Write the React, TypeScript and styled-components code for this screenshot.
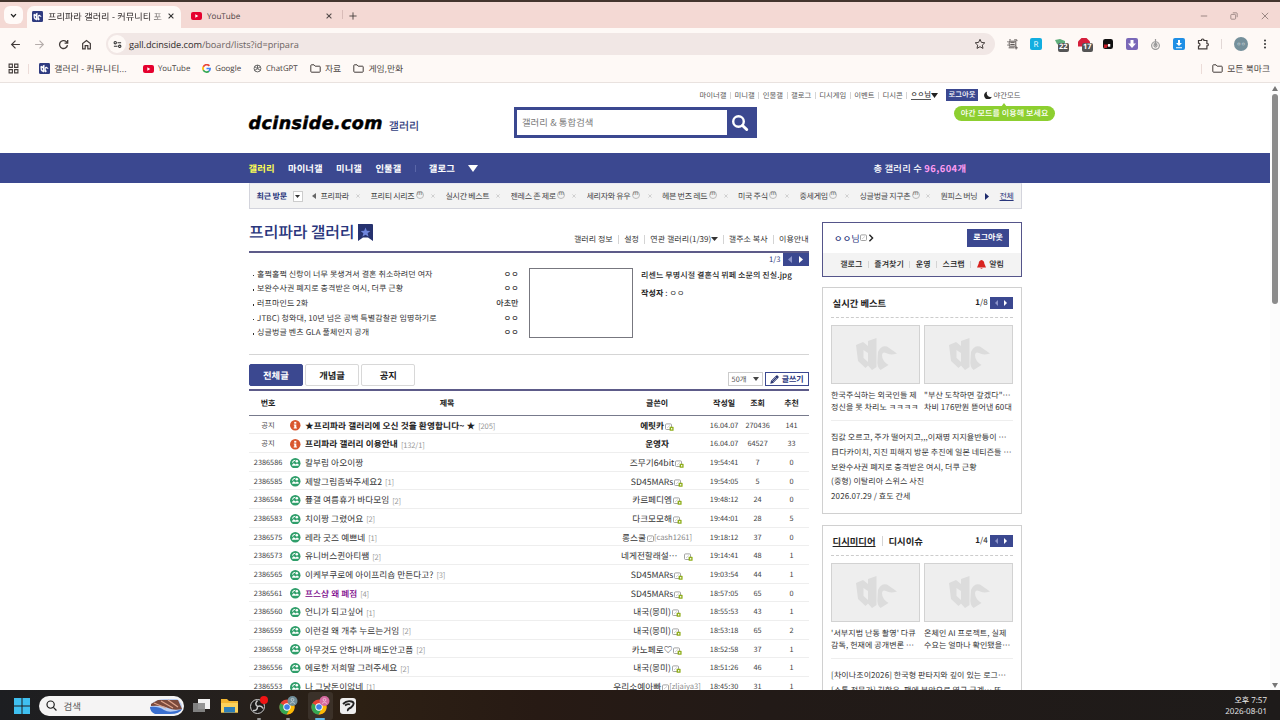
import React from "react";
import styled, { createGlobalStyle, css } from "styled-components";

const BLUE = "#3b4890";
const KR = '"Noto Sans CJK KR", "Liberation Sans", sans-serif';
const UI = '"Open Sans", "Noto Sans CJK KR", sans-serif';

const Global = createGlobalStyle`
  * { box-sizing: border-box; }
  html, body { margin: 0; padding: 0; background: #fff; overflow: hidden; }
  body { font-family: ${KR}; color: #333; text-rendering: geometricPrecision; }
  svg { display: block; flex: none; }
`;

const Screen = styled.div`
  width: 1280px;
  height: 720px;
  display: flex;
  flex-direction: column;
  overflow: hidden;
`;

/* ---------- browser frame ---------- */
const TabStrip = styled.div`
  height: 28px;
  flex: none;
  display: flex;
  align-items: flex-end;
  padding-left: 4px;
  background: #f4d9d4;
  border-top: 2px solid #43342d;
  font-family: ${UI};
`;
const TabSearch = styled.div`
  width: 19px;
  height: 18px;
  margin: 0 4px 4px 0;
  border-radius: 6px;
  background: #fffaf8;
  display: grid;
  place-items: center;
`;
const Tab = styled.div<{ $active?: boolean; $w: number }>`
  width: ${(p) => p.$w}px;
  height: 22px;
  padding: 0 7px 2px 5px;
  display: flex;
  align-items: center;
  gap: 5px;
  border-radius: 7px 7px 0 0;
  background: ${(p) => (p.$active ? "#fef9f6" : "transparent")};
  font-size: ${(p) => (p.$active ? 9.2 : 8.1)}px;
  color: ${(p) => (p.$active ? "#2b2626" : "#4c4343")};
`;
const TabTitle = styled.span<{ $fade?: boolean }>`
  flex: 1;
  overflow: hidden;
  white-space: nowrap;
  ${(p) => p.$fade && css`mask-image: linear-gradient(90deg, #000 88%, rgba(0,0,0,.3));`}
`;
const StripDivider = styled.i`
  width: 1px;
  height: 9px;
  margin: 0 6px 9px 3px;
  background: #d9bcb8;
`;
const NewTab = styled.div`
  margin-bottom: 8px;
`;
const WindowButtons = styled.div`
  margin-left: auto;
  display: flex;
  gap: 22.5px;
  padding: 0 11.5px 8px 0;
`;
const Toolbar = styled.div`
  height: 32px;
  flex: none;
  display: flex;
  align-items: center;
  background: #fef9f6;
  font-family: ${UI};
  padding: 0 10px 0 10px;
`;
const NavIcons = styled.div`
  display: flex;
  gap: 12.8px;
  width: 96px;
`;
const UrlBar = styled.div`
  width: 889px;
  height: 22px;
  border-radius: 11px;
  background: #f1e7e5;
  display: flex;
  align-items: center;
  padding: 0 9px 0 2px;
  font-size: 9.2px;
  letter-spacing: -0.03px;
  color: #6c6362;
  b { font-weight: 400; color: #2e2929; }
  svg:last-child { margin-left: auto; }
`;
const SiteInfo = styled.div`
  width: 18px;
  height: 18px;
  border-radius: 50%;
  background: #fef9f6;
  margin-right: 3px;
  display: flex;
  align-items: center;
  justify-content: center;
  && svg { margin: 0; }
`;
const Extensions = styled.div`
  display: flex;
  align-items: center;
  gap: 12px;
  margin-left: 12px;
`;
const Ext = styled.div<{ $bg?: string }>`
  position: relative;
  width: 12px;
  height: 12px;
  border-radius: 2px;
  background: ${(p) => p.$bg ?? "transparent"};
  color: #fff;
  font-size: 8px;
  display: grid;
  place-items: center;
`;
const Badge = styled.span`
  position: absolute;
  left: 4px;
  top: 5px;
  height: 9px;
  padding: 0 1px;
  border-radius: 2px;
  background: #555;
  font: 700 7.5px/9px ${UI};
`;
const Avatar = styled.div`
  width: 14px;
  height: 14px;
  border-radius: 50%;
  background: #75909b;
  color: #c9d6da;
  font-size: 5px;
  display: grid;
  place-items: center;
`;
const Bookmarks = styled.div`
  height: 23px;
  flex: none;
  display: flex;
  align-items: center;
  padding: 0 10px 5px 8px;
  background: #fef9f6;
  border-bottom: 1px solid #e9e2df;
  font: 8.8px ${UI};
  color: #4a4442;
`;
const Bookmark = styled.span<{ $x?: number; $ls?: number; $latin?: boolean }>`
  display: flex;
  align-items: center;
  gap: 4.3px;
  margin-left: ${(p) => p.$x ?? 12}px;
  letter-spacing: ${(p) => p.$ls ?? 0}px;
  font-size: ${(p) => (p.$latin ? 7.9 : 8.8)}px;
  line-height: 14px;
  white-space: nowrap;
`;
const Bar = styled.i<{ $h?: number; $m?: string; $c?: string }>`
  width: 1px;
  height: ${(p) => p.$h ?? 7}px;
  margin: ${(p) => p.$m ?? "0"};
  background: ${(p) => p.$c ?? "#d4d4d4"};
  flex: none;
`;

/* ---------- page ---------- */
const Viewport = styled.div`
  flex: 1;
  min-height: 0;
  display: flex;
  overflow: hidden;
  background: #fff;
`;
const Page = styled.div`
  width: 1270px;
  height: 607px;
  overflow: hidden;
`;
const Scrollbar = styled.div`
  width: 10px;
  display: flex;
  flex-direction: column;
  align-items: center;
  padding: 3px 0 2px;
  background: #fcfcfc;
`;
const Thumb = styled.i`
  width: 6px;
  height: 210px;
  margin: 3px 0 auto;
  border-radius: 3px;
  background: #8b8b8b;
`;
const Center = styled.div`
  width: 773.5px;
  margin: 0 0 0 248.6px;
`;
const Header = styled(Center)`
  height: 70px;
  display: flex;
  align-items: flex-start;
`;
const Brand = styled.div`
  display: flex;
  align-items: center;
  margin-top: 31px;
  height: 20px;
  width: 265.7px;
`;
const Logo = styled.span`
  font: italic 700 17.5px/20px "DejaVu Sans", sans-serif;
  letter-spacing: 0.4px;
  color: #000;
  -webkit-text-stroke: 0.5px #000;
`;
const LogoSub = styled.span`
  margin-left: 6px;
  font-size: 11px;
  font-weight: 500;
  color: #33407e;
  padding-top: 3px;
`;
const Search = styled.div`
  display: flex;
  width: 243px;
  height: 31px;
  margin-top: 24px;
  border: 3px solid ${BLUE};
  font-size: 9.33px;
  letter-spacing: 0.1px;
  line-height: 25px;
  color: #777;
  background: #fff;
  padding-left: 5px;
`;
const SearchButton = styled.div`
  margin-left: auto;
  width: 27px;
  background: ${BLUE};
  display: grid;
  place-items: center;
`;
const UtilWrap = styled.div`
  width: 322.5px;
  margin-left: -57px;
  height: 60px;
`;
const Util = styled.div`
  display: flex;
  align-items: center;
  height: 12px;
  margin-top: 6px;
  font-size: 7.33px;
  color: #555;
  white-space: nowrap;
`;
const UserName = styled.span`
  color: #333;
  border-bottom: 1px solid #555;
  line-height: 9px;
  font-weight: 500;
`;
const LogoutSmall = styled.span`
  margin: 0 6px 0 8px;
  width: 32px;
  height: 12px;
  line-height: 11.5px;
  text-align: center;
  background: ${BLUE};
  color: #fff;
  font-weight: 500;
`;
const NightTip = styled.div`
  position: relative;
  width: 101px;
  height: 15px;
  margin: 4.5px 0 0 254.5px;
  border-radius: 8px;
  background: #8dcf30;
  color: #fff;
  font-weight: 500;
  font-size: 8px;
  letter-spacing: 0.08px;
  line-height: 15.5px;
  text-align: center;
  white-space: nowrap;
  &::before {
    content: "";
    position: absolute;
    left: 47px;
    top: -3px;
    border: 3.5px solid transparent;
    border-top: 0;
    border-bottom: 4px solid #8dcf30;
  }
`;
const NavBand = styled.div`
  height: 30px;
  background: ${BLUE};
`;
const Nav = styled(Center)`
  height: 30px;
  display: flex;
  align-items: center;
  color: #fff;
  font-size: 9.33px;
  font-weight: 700;
  white-space: nowrap;
  letter-spacing: 0.08px;
`;
const NavItem = styled.span<{ $on?: boolean }>`
  margin-right: 13.4px;
  color: ${(p) => (p.$on ? "#ffff53" : "#fff")};
`;
const NavTotal = styled.span`
  margin-left: auto;
  margin-right: 55.5px;
  font-weight: 500;
  letter-spacing: 0.2px;
  b { color: #ff9cf3; font-weight: 700; letter-spacing: 0.45px; }
`;
const Recent = styled(Center)`
  height: 26px;
  display: flex;
  align-items: center;
  border: 1px solid #d3d4dc;
  border-top: 1px solid #e7e8f0;
  background: #f3f3f3;
  font-size: 8px;
  letter-spacing: -0.33px;
  white-space: nowrap;
  padding-left: 7px;
  color: #444;
`;
const RecentLabel = styled.b`
  color: #29367c;
  width: 36px;
  letter-spacing: -0.2px;
`;
const RecentSelect = styled.span`
  width: 10px;
  height: 11px;
  border: 1px solid #ccc;
  background: #fff;
  display: grid;
  place-items: center;
  margin-right: 9.5px;
`;
const RecentItem = styled.span<{ $w: number }>`
  width: ${(p) => p.$w}px;
  display: flex;
  align-items: center;
  overflow: hidden;
  &:not(:nth-last-of-type(2)) { padding-right: 10.5px; }
  svg:last-child:not(:first-child) { margin-left: auto; }
`;
const RecentAll = styled.span`
  margin-left: auto;
  margin-right: 7.5px;
  color: #29367c;
  text-decoration: underline;
`;
const MinorMark = styled.i`
  width: 8px;
  height: 8px;
  margin: -3px 0 0 1.5px;
  border: 1px solid #bbb;
  border-radius: 50%;
  font: 6.5px/4.5px "Liberation Sans", sans-serif;
  display: flex;
  justify-content: center;
  color: #666;
  letter-spacing: 0;
`;
const Columns = styled(Center)`
  display: flex;
  justify-content: space-between;
  align-items: flex-start;
`;
const Main = styled.main`
  width: 560px;
`;
const TitleRow = styled.div`
  height: 43.5px;
  display: flex;
  border-bottom: 2px solid #5d5b89;
`;
const Title = styled.h1`
  margin: 9.5px 0 0 0.5px;
  height: 24px;
  font-size: 16px;
  line-height: 24px;
  font-weight: 500;
  letter-spacing: -0.18px;
  color: #29367c;
`;
const Flag = styled.span`
  margin: 15px 0 0 3px;
`;
const TitleLinks = styled.div`
  margin: 24px 0 0 auto;
  height: 12px;
  display: flex;
  align-items: center;
  font-size: 8px;
  white-space: nowrap;
  letter-spacing: 0.04px;
  color: #333;
`;
const Featured = styled.section`
  height: 102px;
  display: flex;
  border-bottom: 1px solid #d5d5d5;
`;
const HotList = styled.ul`
  list-style: none;
  margin: 0;
  padding: 15.3px 0 0 4px;
  width: 270px;
`;
const HotItem = styled.li`
  display: flex;
  justify-content: space-between;
  height: 14.67px;
  line-height: 14.67px;
  font-size: 8px;
  white-space: nowrap;
  color: #333;
  letter-spacing: 0.1px;
  &::before {
    content: "";
    width: 1.5px;
    height: 1.5px;
    margin: 7px 3px 0 0;
    background: #333;
  }
  b { margin-left: auto; font-weight: 500; }
`;
const HotThumb = styled.div`
  width: 104px;
  height: 70px;
  margin: 15.5px 0 0 10px;
  border: 1px solid #77777f;
`;
const HotInfo = styled.div`
  flex: 1;
  margin-left: 8.5px;
  font-size: 8px;
  letter-spacing: 0.09px;
  color: #222;
  white-space: nowrap;
  p { margin: 0; font-weight: 500; line-height: 12px; height: 18px; padding-top: 4.5px; }
  p + p { font-weight: 400; }
`;
const Pager = styled.div`
  display: flex;
  align-items: center;
  justify-content: flex-end;
  font-size: 7.6px;
  line-height: 13px;
  color: #29367c;
`;
const Arrows = styled.span<{ $w?: number; $h?: number }>`
  width: ${(p) => p.$w ?? 26}px;
  height: ${(p) => p.$h ?? 13}px;
  margin-left: 2px;
  background: ${BLUE};
  display: flex;
  align-items: center;
  justify-content: space-around;
  padding: 0 2px;
`;
const Controls = styled.div`
  height: 36px;
  display: flex;
  align-items: flex-start;
  padding-top: 9.5px;
  border-bottom: 2px solid #5d5b89;
`;
const ModeButton = styled.div<{ $on?: boolean }>`
  width: 54.5px;
  height: 22px;
  margin-right: 1.7px;
  border: 1px solid ${(p) => (p.$on ? BLUE : "#d8d8d8")};
  border-radius: 2px;
  background: ${(p) => (p.$on ? BLUE : "#fff")};
  color: ${(p) => (p.$on ? "#fff" : "#222")};
  font-size: 9.33px;
  font-weight: 700;
  line-height: 20.5px;
  text-align: center;
`;
const CountSelect = styled.div`
  margin: 7.5px 2px 0 auto;
  width: 35px;
  height: 14px;
  padding: 1px 3px 0;
  border: 1px solid #ccc;
  display: flex;
  align-items: center;
  justify-content: space-between;
  font-size: 7.33px;
  color: #555;
`;
const WriteButton = styled.div`
  margin-top: 7.5px;
  width: 44px;
  height: 14px;
  padding-top: 1.5px;
  border: 1px solid ${BLUE};
  display: flex;
  align-items: center;
  justify-content: center;
  gap: 3px;
  font-size: 8px;
  font-weight: 700;
  letter-spacing: -0.2px;
  color: #29367c;
`;
const Row = styled.div<{ $head?: boolean }>`
  display: grid;
  grid-template-columns: 39px 319px 101px 33px 34px 34px;
  height: ${(p) => (p.$head ? 25.3 : 18.67)}px;
  padding-top: ${(p) => (p.$head ? 2.4 : 2)}px;
  align-items: center;
  text-align: center;
  white-space: nowrap;
  font-size: ${(p) => (p.$head ? 8 : 7.33)}px;
  line-height: 12px;
  font-weight: ${(p) => (p.$head ? 700 : 400)};
  color: ${(p) => (p.$head ? "#222" : "#444")};
  border-bottom: 1px solid ${(p) => (p.$head ? "#777a8c" : "#eee")};
`;
const Subject = styled.span<{ $bold?: boolean; $visited?: boolean }>`
  display: flex;
  align-items: center;
  padding-left: 2.5px;
  font-size: 8.67px;
  letter-spacing: ${(p) => (p.$bold ? 0.1 : 0.05)}px;
  font-weight: ${(p) => (p.$bold ? 700 : p.$visited ? 500 : 400)};
  color: ${(p) => (p.$visited ? "#770088" : p.$bold ? "#222" : "#333")};
  svg { margin-right: 4.5px; }
`;
const Replies = styled.em`
  font: 400 7.6px/10px ${KR};
  letter-spacing: -0.2px;
  color: #999;
  margin: 3px 0 0 3px;
`;
const Writer = styled.span<{ $bold?: boolean }>`
  display: flex;
  align-items: center;
  justify-content: center;
  font-size: 8.67px;
  font-weight: ${(p) => (p.$bold ? 700 : 400)};
  color: ${(p) => (p.$bold ? "#222" : "#333")};
  svg { margin: 2px 0 0 1px; }
  small { font-size: 7.6px; color: #888; padding-top: 1px; }
`;
const Side = styled.aside`
  width: 200px;
  margin-top: 13px;
  display: flex;
  flex-direction: column;
  gap: 11px;
`;
const LoginBox = styled.section`
  height: 54.5px;
  margin-bottom: -1px;
  border: 1px solid #55558a;
  white-space: nowrap;
`;
const LoginTop = styled.div`
  height: 29.5px;
  display: flex;
  align-items: center;
  padding: 0 12px 0 11px;
  font-size: 9.2px;
  letter-spacing: 0.1px;
  color: #29367c;
  b { font-weight: 500; }
`;
const LogoutButton = styled.div`
  margin-left: auto;
  width: 42px;
  height: 18px;
  background: ${BLUE};
  color: #fff;
  font-size: 8px;
  font-weight: 700;
  line-height: 18px;
  text-align: center;
`;
const LoginLinks = styled.div`
  height: 23px;
  padding-top: 1.5px;
  background: #f3f3f3;
  display: flex;
  align-items: center;
  justify-content: center;
  font-size: 8px;
  font-weight: 500;
  color: #222;
`;
const Panel = styled.section`
  height: 227px;
  border: 1px solid #d0d0d0;
  padding: 0 8.5px 0 8px;
  flex: none;
`;
const PanelHead = styled.div`
  height: 30px;
  display: flex;
  align-items: center;
  font-size: 9.33px;
  font-weight: 700;
  color: #222;
  border-bottom: 1.5px dashed #ccc;
  padding: 1px 0 0 1.5px;
  white-space: nowrap;
`;
const PanelPage = styled.span`
  margin-left: auto;
  font-size: 8px;
  font-weight: 400;
  b { font-weight: 700; }
`;
const Cards = styled.div`
  display: flex;
  justify-content: space-between;
  padding: 7px 0 5.5px;
  border-bottom: 1px solid #eee;
`;
const Card = styled.div`
  width: 88.5px;
  font-size: 8px;
  letter-spacing: 0.08px;
  line-height: 12.3px;
  color: #333;
  white-space: nowrap;
`;
const CardThumb = styled.div`
  height: 59px;
  margin-bottom: 6.5px;
  border: 1px solid #d2d2d2;
  background: #eee;
`;
const PanelList = styled.div`
  padding-top: 10.3px;
  font-size: 8px;
  letter-spacing: 0.08px;
  line-height: 14.67px;
  color: #333;
  white-space: nowrap;
`;

/* ---------- taskbar ---------- */
const Taskbar = styled.footer`
  height: 30px;
  flex: none;
  display: flex;
  align-items: center;
  padding: 1px 13px 0 14px;
  background: linear-gradient(90deg, #1d1e21 0%, #25201d 18%, #2d2014 28%, #271a14 42%, #221a17 60%, #1e1b1a 100%);
  font-family: ${UI};
`;
const TaskSearch = styled.div`
  width: 145px;
  height: 20px;
  margin: 0 9px 0 8.5px;
  border-radius: 10px;
  background: #f5f4f4;
  display: flex;
  align-items: center;
  gap: 7px;
  padding: 0 1px 0 7px;
  font-size: 9.5px;
  color: #555;
  svg:last-child { margin-left: auto; }
`;
const Task = styled.div<{ $w?: number; $on?: boolean; $run?: boolean }>`
  position: relative;
  width: ${(p) => p.$w ?? 29.3}px;
  height: 28px;
  display: grid;
  place-items: center;
  border-radius: 3px;
  background: ${(p) => (p.$on ? "rgba(255,255,255,.08)" : "none")};
  &::after {
    content: "";
    position: absolute;
    bottom: 0;
    width: ${(p) => (p.$on ? 10 : 4)}px;
    height: 1.5px;
    border-radius: 1px;
    background: ${(p) => (p.$on ? "#5fb8e8" : p.$run ? "#999" : "transparent")};
  }
`;
const Clock = styled.div`
  margin-left: auto;
  text-align: right;
  color: #eee;
  font-size: 8px;
  line-height: 11px;
`;

/* ---------- icons ---------- */
const Svg = (p: { s?: number; w?: number; h?: number; v?: string; c?: string; sw?: number; children: React.ReactNode }) => (
  <svg width={p.w ?? p.s ?? 10} height={p.h ?? p.s ?? 10} viewBox={p.v ?? "0 0 10 10"} fill="none" stroke={p.c ?? "#433c3a"} strokeWidth={p.sw ?? 1.1}>
    {p.children}
  </svg>
);
const Tri = ({ d, c = "#333", w = 6, h = 4 }: { d: "u" | "d" | "l" | "r"; c?: string; w?: number; h?: number }) => {
  const pts = { u: "0,10 10,10 5,0", d: "0,0 10,0 5,10", l: "10,0 10,10 0,5", r: "0,0 0,10 10,5" }[d];
  return (
    <svg width={w} height={h} viewBox="0 0 10 10" preserveAspectRatio="none"><polygon points={pts} fill={c} /></svg>
  );
};
const Close = ({ s = 6, c = "#333", sw = 1.8 }) => <Svg s={s} c={c} sw={sw}><path d="M1 1l8 8M9 1L1 9" /></Svg>;
const MARK =
  "M25 20L32 17L37 21V16L45.500 13V42L41 45L37 40.500L34.500 43L27 36ZM32.500 25V33L37 37V28Z M47 27Q50 20 56 21.500L66 28.500Q59 30.500 55 28Q51.500 26.500 51 30Q51 36 57.500 40L49.500 45Q45.500 42 46.500 34Z";
const DcIcon = ({ s = 11 }) => (
  <svg width={s} height={s} viewBox="0 0 12 12"><rect width="12" height="12" rx="1.5" fill="#2f3b80" /><path transform="translate(-4 -1.7) scale(.22 .27)" d={MARK} fill="#fff" fillRule="evenodd" /></svg>
);
const YtIcon = () => (
  <svg width="11" height="8" viewBox="0 0 11 8"><rect width="11" height="8" rx="2" fill="#e5002e" /><path d="M4.3 2.2v3.6L7.3 4z" fill="#fff" /></svg>
);
const GoogleIcon = () => (
  <svg width="9" height="9" viewBox="0 0 10 10" fill="none" strokeWidth="1.9">
    <path d="M8.2 2.1A4 4 0 0 0 1.5 3.2" stroke="#ea4335" /><path d="M1.5 3.2a4 4 0 0 0 0 3.6" stroke="#fbbc05" />
    <path d="M1.5 6.8A4 4 0 0 0 7.8 7.9" stroke="#34a853" /><path d="M5 5h4A4 4 0 0 1 7.8 7.9" stroke="#4285f4" />
  </svg>
);
const Folder = () => <Svg w={11} h={9} v="0 0 11 9" sw={1}><path d="M.8 7.3V1.5Q.8.8 1.5.8H4l1.2 1.4h4.3q.7 0 .7.7v4.6q0 .7-.7.7h-8q-.7 0-.7-.9z" /></Svg>;
const Info = () => (
  <svg width="10.500" height="10.500" viewBox="0 0 10 10"><circle cx="5" cy="5" r="5" fill="#d9572f" /><rect x="4" y="1.800" width="2" height="1.700" fill="#fff" /><path d="M3.600 4.300H6v2.900h.6v1H3.500v-1h.6V5.200h-.5z" fill="#fff" /></svg>
);
const Photo = () => (
  <svg width="10.500" height="10.500" viewBox="0 0 10 10">
    <circle cx="5" cy="5" r="5" fill="#2f9e6a" />
    <path d="M1.900 7.300Q2 5.400 3.600 4.900L5.400 6.100 6.600 5.200 8.200 5.900V7.300z" fill="#fff" />
    <path d="M2.300 4.300Q3 2.300 5 2.200" stroke="#fff" strokeWidth="1" fill="none" />
    <circle cx="6.500" cy="3.200" r="1.200" fill="#fff" />
  </svg>
);
const NickCon = ({ fixed }: { fixed?: boolean }) => (
  <svg width={fixed ? 9 : 7} height="8" viewBox={fixed ? "0 0 9 8" : "0 0 7 8"}>
    <rect x=".5" y=".9" width="6" height="5.6" rx="1" fill="#fff" stroke="#999" strokeWidth=".9" />
    <path d="M2 5l3-2.6" stroke="#bbb" strokeWidth=".7" />
    {fixed && <><rect x="4.6" y="3.8" width="4" height="4" rx=".6" fill="#8fae1b" /><rect x="6" y="5.1" width="1.3" height="1.4" fill="#fff" /></>}
  </svg>
);
const Chrome = ({ badge }: { badge: string }) => (
  <svg width="20" height="20" viewBox="0 0 20 20">
    <circle cx="9" cy="11" r="7.6" fill="#ea4335" /><path d="M2.4 7.2A7.6 7.6 0 0 0 8.6 18.6L12.3 13z" fill="#34a853" />
    <path d="M9 7.6h6.8A7.6 7.6 0 0 1 8.6 18.6L12.2 12z" fill="#fbbc05" /><circle cx="9" cy="11" r="3.7" fill="#fff" /><circle cx="9" cy="11" r="2.8" fill="#3f7fe8" />
    <circle cx="14.5" cy="5" r="5" fill={badge} /><circle cx="14.5" cy="3.8" r="1.4" fill="none" stroke="#fff" strokeWidth=".7" opacity=".7" /><path d="M12 7.5q2.5-2.6 5 0" fill="none" stroke="#fff" strokeWidth=".7" opacity=".7" />
  </svg>
);
const DcThumb = () => (
  <svg width="86" height="57" viewBox="1 1 86 57"><path d={MARK} fill="#dcdcdc" fillRule="evenodd" /></svg>
);

/* ---------- data ---------- */
const recents: [string, boolean, number][] = [
  ["프리파라", false, 50], ["프리티 시리즈", true, 75], ["실시간 베스트", false, 65], ["젠레스 존 제로", true, 76],
  ["세리자와 유우", true, 75.5], ["헤븐 번즈 레드", true, 76], ["미국 주식", true, 61.5], ["중세게임", true, 60], ["싱글벙글 지구촌", true, 81], ["원피스 버닝", false, 38],
];
const hot: [string, string][] = [
  ["훌쩍훌쩍 신랑이 너무 못생겨서 결혼 취소하려던 여자", "ㅇㅇ"], ["보완수사권 폐지로 충격받은 여시, 더쿠 근황", "ㅇㅇ"], ["러프마인드 2화", "아초만"],
  ["JTBC) 청와대, 10년 넘은 공백 특별감찰관 임명하기로", "ㅇㅇ"], ["싱글벙글 벤츠 GLA 풀체인지 공개", "ㅇㅇ"],
];
type Post = { no: string; t: string; r?: string; w: string; id?: string; con?: boolean; d: string; v: string; u: string; visited?: boolean; gap?: boolean };
const posts: Post[] = [
  { no: "공지", t: "★프리파라 갤러리에 오신 것을 환영합니다~ ★", r: "205", w: "에릿카", con: true, d: "16.04.07", v: "270436", u: "141" },
  { no: "공지", t: "프리파라 갤러리 이용안내", r: "132/1", w: "운영자", d: "16.04.07", v: "64527", u: "33" },
  { no: "2386586", t: "칼부림 아오이짱", w: "즈무기64bit", con: true, d: "19:54:41", v: "7", u: "0" },
  { no: "2386585", t: "제발그림좀봐주세요2", r: "1", w: "SD45MARs", con: true, d: "19:54:05", v: "5", u: "0" },
  { no: "2386584", t: "픂갤 여름휴가 바다모임", r: "2", w: "카르페디엠", con: true, d: "19:48:12", v: "24", u: "0" },
  { no: "2386583", t: "치이짱 그렸어요", r: "2", w: "다크모모해", con: true, d: "19:44:01", v: "28", u: "5" },
  { no: "2386575", t: "레라 굿즈 예쁘네", r: "1", w: "롱스쿨", id: "cash1261", d: "19:18:12", v: "37", u: "0" },
  { no: "2386573", t: "유니버스퀸아티쌤", r: "2", w: "네게전할래설⋯", con: true, gap: true, d: "19:14:41", v: "48", u: "1" },
  { no: "2386565", t: "이케부쿠로에 아이프리숍 만든다고?", r: "3", w: "SD45MARs", con: true, d: "19:03:54", v: "44", u: "1" },
  { no: "2386561", t: "프스샵 왜 폐점", r: "4", w: "SD45MARs", con: true, d: "18:57:05", v: "65", u: "0", visited: true },
  { no: "2386560", t: "언니가 되고싶어", r: "1", w: "내국(몽미)", con: true, d: "18:55:53", v: "43", u: "1" },
  { no: "2386559", t: "이런걸 왜 개추 누르는거임", r: "2", w: "내국(몽미)", con: true, d: "18:53:18", v: "65", u: "2" },
  { no: "2386558", t: "아무것도 안하니까 배도안고픔", r: "2", w: "카노페로♡", con: true, d: "18:52:58", v: "37", u: "1" },
  { no: "2386556", t: "에로한 저희딸 그려주세요", r: "2", w: "내국(몽미)", con: true, d: "18:51:26", v: "46", u: "1" },
  { no: "2386553", t: "나 그냥돈이없네", r: "1", w: "우리소예아빠", id: "zljaiya3", d: "18:45:30", v: "31", u: "1" },
];

const PanelArrows = () => (
  <Arrows $w={23} $h={12}><Tri d="l" c="#8b93c9" w={3} h={6} /><Tri d="r" c="#fff" w={3} h={6} /></Arrows>
);

export default function App() {
  return (
    <Screen>
      <Global />
      <TabStrip>
        <TabSearch><Svg s={7} c="#222" sw={1.9}><path d="M1.5 3l3.5 3.7L8.5 3" /></Svg></TabSearch>
        <Tab $active $w={154}><DcIcon /><TabTitle $fade>프리파라 갤러리 - 커뮤니티 포</TabTitle><Close /></Tab>
        <Tab $w={158}><span /><YtIcon /><TabTitle>YouTube</TabTitle><Close c="#554c4b" /></Tab>
        <StripDivider />
        <NewTab><Svg s={8}><path d="M5 .5v9M.5 5h9" /></Svg></NewTab>
        <WindowButtons>
          <Svg s={8} c="#8f7c79"><path d="M1 5h8" /></Svg>
          <Svg s={8} c="#8f7c79" sw={1}><rect x="1" y="3" width="6" height="6" rx="1" /><path d="M3.5 1H8q1 0 1 1v4.500" /></Svg>
          <Close s={8} c="#8f7c79" sw={1.1} />
        </WindowButtons>
      </TabStrip>
      <Toolbar>
        <NavIcons>
          <Svg s={11} sw={1.1}><path d="M9 5H1.500M5 1.500L1.500 5 5 8.500" /></Svg>
          <Svg s={11} c="#b5adab" sw={1}><path d="M1 5h7.500M5 1.500L8.500 5 5 8.500" /></Svg>
          <Svg s={11} sw={1.2}><path d="M8.600 5.500A3.600 3.600 0 1 1 7.500 2.400L8.600 3.500M8.800 1v2.700H6" /></Svg>
          <Svg s={11} sw={1.1}><path d="M1.500 9V4.200L5 1.300l3.500 2.900V9H6.200V6H3.800v3z" /></Svg>
        </NavIcons>
        <UrlBar>
          <SiteInfo><Svg s={9} c="#333" sw={1.2}><circle cx="2.500" cy="3" r="1.300" /><path d="M5 3h4M1 7h4" /><circle cx="7.500" cy="7" r="1.300" /></Svg></SiteInfo>
          <b>gall.dcinside.com</b>/board/lists?id=pripara
          <Svg s={12} v="0 0 12 12" sw={1}><path d="M6 1.300l1.400 3.100 3.400.4-2.500 2.300.7 3.300L6 8.700l-3 1.700.7-3.300L1.200 4.800l3.400-.4z" /></Svg>
        </UrlBar>
        <Extensions>
          <Svg s={11} c="#5c5654" sw={0.9}><path d="M2 2h6v4.500H2zM.8 2v1M.8 5v1M2 .800h1.500M6.500.800H9V2M3 3.300h4M3 5h4M1.500 8h5M8.300 6.500v3M6.800 8h3" /></Svg>
          <Ext $bg="#12aee0">R</Ext>
          <Ext><svg width="12" height="12" viewBox="0 0 12 12"><path d="M1 2l5-1 5 2v4q-5 2-8-1z" fill="#5fae7c" /></svg><Badge>22</Badge></Ext>
          <Ext><svg width="12" height="12" viewBox="0 0 12 12"><path d="M3.500 0h5L12 3.500v5H0v-5z" fill="#d51f3c" /></svg><Badge>17</Badge></Ext>
          <Ext><svg width="10" height="10" viewBox="0 0 11 11"><rect y="0" width="11" height="11" rx="2.500" fill="#111" /><path d="M1 6h5l-2 4H1z" fill="#c4202b" /><path d="M5.500 5.500h2.500v3H5.500z" fill="#fff" /></svg></Ext>
          <Ext $bg="#7a68b8"><svg width="8" height="8" viewBox="0 0 8 8"><path d="M2.500 0h3v3.500H8L4 8 0 3.500h2.500z" fill="#fff" /></svg></Ext>
          <Svg s={11} c="#999"><circle cx="5" cy="6" r="3.500" /><circle cx="5" cy="6" r="1.400" /><path d="M5 0v6M3.500 4L5 6l1.500-2" /></Svg>
          <Ext $bg="#1f8fe5"><svg width="8" height="9" viewBox="0 0 8 9"><path d="M3 0h2v3h2L4 6 1 3h2zM1 7.300h6v1H1z" fill="#fff" /></svg></Ext>
          <Svg s={12} v="0 0 12 12" sw={1.2}><path d="M1.500 2.500h3q-.2-1.500 1.200-1.500t1.200 1.500h3v3q1.400-.1 1.400 1.200t-1.400 1.200v3h-8.400V8.200q1.500 0 1.500-1.500T1.500 5.200z" /></Svg>
          <Bar $h={10} $c="#e2d8d6" />
          <Avatar>ㅇㅇ</Avatar>
          <svg width="10" height="10" viewBox="0 0 10 10" fill="#333"><circle cx="5" cy="1.600" r="1" /><circle cx="5" cy="5" r="1" /><circle cx="5" cy="8.400" r="1" /></svg>
        </Extensions>
      </Toolbar>
      <Bookmarks>
        <Svg s={11} sw={1}><path d="M1 1h3v3H1zM6 1h3v3H6zM1 6h3v3H1zM6 6h3v3H6z" /></Svg>
        <Bar $h={10} $m="0 0 0 9px" $c="#ecdcd8" />
        <Bookmark $x={10} $ls={0.1}><DcIcon />갤러리 - 커뮤니티...</Bookmark>
        <Bookmark $x={16} $latin><YtIcon />YouTube</Bookmark>
        <Bookmark $x={11.500} $latin><GoogleIcon />Google</Bookmark>
        <Bookmark $x={11.500} $latin><Svg s={9} c="#666"><circle cx="5" cy="5" r="3.800" /><path d="M5 1.200v4l3.300 2M5 5.200L1.700 7.200M2 3l3 2.200L8 3" /></Svg>ChatGPT</Bookmark>
        <Bookmark><Folder />자료</Bookmark>
        <Bookmark><Folder />게임,만화</Bookmark>
        <Bar $h={10} $m="0 0 0 auto" $c="#ecdcd8" />
        <Bookmark $x={10}><Folder />모든 북마크</Bookmark>
      </Bookmarks>

      <Viewport>
        <Page>
          <Header>
            <Brand><Logo>dcinside.com</Logo><LogoSub>갤러리</LogoSub></Brand>
            <Search>
              갤러리 &amp; 통합검색
              <SearchButton>
                <svg width="18" height="18" viewBox="0 0 18 18" fill="none" stroke="#fff"><circle cx="7.500" cy="7.500" r="5.300" strokeWidth="2.400" /><path d="M11.500 11.500l4.200 4" strokeWidth="3" strokeLinecap="round" /></svg>
              </SearchButton>
            </Search>
            <UtilWrap>
              <Util>
                {["마이너갤", "미니갤", "인물갤", "갤로그", "디시게임", "이벤트", "디시콘"].map((t) => (
                  <React.Fragment key={t}>{t}<Bar $m="0 3.500px" /></React.Fragment>
                ))}
                <UserName>ㅇㅇ님</UserName><Tri d="d" w={7} h={5} c="#222" />
                <LogoutSmall>로그아웃</LogoutSmall>
                <svg width="8" height="8" viewBox="0 0 10 10"><path d="M4 .5A5 5 0 1 0 9.800 7.200 4.800 4.800 0 0 1 4 .5z" fill="#222" /></svg>
                <span>&nbsp;야간모드</span>
              </Util>
              <NightTip>야간 모드를 이용해 보세요</NightTip>
            </UtilWrap>
          </Header>
          <NavBand>
            <Nav>
              <NavItem $on>갤러리</NavItem><NavItem>마이너갤</NavItem><NavItem>미니갤</NavItem><NavItem>인물갤</NavItem>
              <Bar $c="#5a66a8" $m="0 13px 0 0" /><NavItem>갤로그</NavItem><Tri d="d" c="#fff" w={10} h={7} />
              <NavTotal>총 갤러리 수 <b>96,604개</b></NavTotal>
            </Nav>
          </NavBand>
          <Recent>
            <RecentLabel>최근 방문</RecentLabel>
            <RecentSelect><Tri d="d" w={5} h={3} /></RecentSelect>
            <Tri d="l" c="#666" w={4} h={6} />
            <Bar $m="0 3.500px 0 0" $c="transparent" />
            {recents.map(([t, m, w], i) => (
              <RecentItem key={t} $w={w}>
                <span>{t}</span>{m && <MinorMark>m</MinorMark>}{i < recents.length - 1 && <Close s={4} c="#bbb" sw={1.6} />}
              </RecentItem>
            ))}
            <Bar $m="0 5px 0 0" $c="transparent" />
            <Tri d="r" c="#1e2a6c" w={4} h={7} />
            <RecentAll>전체</RecentAll>
          </Recent>

          <Columns>
            <Main>
              <TitleRow>
                <Title>프리파라 갤러리</Title>
                <Flag><svg width="17" height="17" viewBox="0 0 17 17"><path d="M1 0h14q1 0 1 1v16l-5-3.500H6L1 17z" fill="#26326f" /><path d="M8.500 3.500l1.300 3.300 3.500.2-2.700 2.200.9 3.300-3-1.800-3 1.800.9-3.300L3.700 7l3.500-.2z" fill="#6f86dd" /></svg></Flag>
                <TitleLinks>
                  갤러리 정보<Bar $m="0 5.200px" $h={9} />설정<Bar $m="0 5.200px" $h={9} />연관 갤러리(1/39)<Tri d="d" w={7} /><Bar $m="0 5px 0 4.500px" $h={9} />갤주소 복사<Bar $m="0 5.200px" $h={9} />이용안내
                </TitleLinks>
              </TitleRow>
              <Featured>
                <HotList>
                  {hot.map(([t, w]) => <HotItem key={t}>{t}<b>{w}</b></HotItem>)}
                </HotList>
                <HotThumb />
                <HotInfo>
                  <Pager>1/3<Arrows><Tri d="l" c="#8b93c9" w={4} h={7} /><Tri d="r" c="#fff" w={4} h={7} /></Arrows></Pager>
                  <p>리센느 무명시절 결혼식 뷔페 소문의 진실.jpg</p>
                  <p><b>작성자</b> : ㅇㅇ</p>
                </HotInfo>
              </Featured>
              <Controls>
                <ModeButton $on>전체글</ModeButton><ModeButton>개념글</ModeButton><ModeButton>공지</ModeButton>
                <CountSelect>50개<Tri d="d" c="#444" w={6} h={4} /></CountSelect>
                <WriteButton>
                  <svg width="9" height="9" viewBox="0 0 9 9"><path d="M.3 8.700L1 5.800 6 .8Q7-.2 8.100.9T8.200 3l-5 5z" fill="#26326f" /><path d="M1.800 6.200L6 2.100M2.900 7.200l4.200-4.200" stroke="#fff" strokeWidth=".5" /></svg>
                  글쓰기
                </WriteButton>
              </Controls>
              <Row $head><span>번호</span><span>제목</span><span>글쓴이</span><span>작성일</span><span>조회</span><span>추천</span></Row>
              {posts.map((p) => {
                const notice = p.no === "공지";
                return (
                  <Row key={p.t}>
                    <span>{p.no}</span>
                    <Subject $bold={notice} $visited={p.visited}>{notice ? <Info /> : <Photo />}{p.t}{p.r && <Replies>[{p.r}]</Replies>}</Subject>
                    <Writer $bold={notice}>
                      {p.w}{p.gap && <>&nbsp;&nbsp;&nbsp;</>}{p.con && <NickCon fixed />}{p.id && <><NickCon /><small>[{p.id}]</small></>}
                    </Writer>
                    <span>{p.d}</span><span>{p.v}</span><span>{p.u}</span>
                  </Row>
                );
              })}
            </Main>

            <Side>
              <LoginBox>
                <LoginTop>
                  <b>ㅇㅇ</b>님<NickCon /><Svg w={8} h={10} c="#222" sw={1.7}><path d="M3 1l4 4-4 4" /></Svg>
                  <LogoutButton>로그아웃</LogoutButton>
                </LoginTop>
                <LoginLinks>
                  갤로그<Bar $m="0 5.500px" />즐겨찾기<Bar $m="0 5.500px" />운영<Bar $m="0 5.500px" />스크랩<Bar $m="0 5.500px" />
                  <svg width="9" height="9" viewBox="0 0 9 9"><path d="M4.500 0Q7.300.5 7.300 3.500L9 7.500H0l1.700-4Q1.700.5 4.500 0zM3.200 8h2.600q-1.300 1.600-2.600 0z" fill="#d8231f" /></svg>
                  &nbsp;&nbsp;알림
                </LoginLinks>
              </LoginBox>
              <Panel>
                <PanelHead>실시간 베스트<PanelPage><b>1</b>/8</PanelPage><PanelArrows /></PanelHead>
                <Cards>
                  <Card><CardThumb><DcThumb /></CardThumb><div>한국주식하는 외국인들 제</div><div>정신을 못 차리노 ㅋㅋㅋㅋ</div></Card>
                  <Card><CardThumb><DcThumb /></CardThumb><div>"부산 도착하면 갚겠다"⋯</div><div>차비 176만원 뜯어낸 60대</div></Card>
                </Cards>
                <PanelList>
                  <div>집값 오르고, 주가 떨어지고,,,이재명 지지율반등이 ⋯</div>
                  <div>日다카이치, 지진 피해지 방문 추진에 일본 네티즌들 ⋯</div>
                  <div>보완수사권 폐지로 충격받은 여시, 더쿠 근황</div>
                  <div>(중형) 이탈리아 스위스 사진</div>
                  <div>2026.07.29 / 효도 간세</div>
                </PanelList>
              </Panel>
              <Panel>
                <PanelHead><u>디시미디어</u><Bar $m="0 6px" $h={10} />디시이슈<PanelPage><b>1</b>/4</PanelPage><PanelArrows /></PanelHead>
                <Cards>
                  <Card><CardThumb><DcThumb /></CardThumb><div>'서부지법 난동 촬영' 다큐</div><div>감독, 헌재에 공개변론 ⋯</div></Card>
                  <Card><CardThumb><DcThumb /></CardThumb><div>온체인 AI 프로젝트, 실제</div><div>수요는 얼마나 확인됐을⋯</div></Card>
                </Cards>
                <PanelList>
                  <div>[차이나조이2026] 한국형 판타지와 깊이 있는 로그⋯</div>
                  <div>[소통 전문가] 김학유, 팬에 부안으로 역규 근계⋯ 또</div>
                </PanelList>
              </Panel>
            </Side>
          </Columns>
        </Page>
        <Scrollbar>
          <Tri d="u" c="#777" w={6} h={5} />
          <Thumb />
          <Tri d="d" c="#777" w={6} h={5} />
        </Scrollbar>
      </Viewport>

      <Taskbar>
        <svg width="16" height="16" viewBox="0 0 16 16"><path d="M0 0h7.500v7.500H0zM8.500 0H16v7.500H8.500zM0 8.500h7.500V16H0zM8.500 8.500H16V16H8.500z" fill="#3fc0f0" /></svg>
        <TaskSearch>
          <Svg s={11} c="#222"><circle cx="4.200" cy="4.200" r="3.300" /><path d="M6.700 6.700L9.500 9.500" /></Svg>검색
          <svg width="34" height="16" viewBox="0 0 34 16"><path d="M2 6Q8 1 16 1h12q6 4 5 11l-12 3H6Q0 12 2 6z" fill="#b9cdf2" /><path d="M1 9q8-1 14 3t18-1q-2 5-12 5H6Q1 14 1 9z" fill="#3a6fd0" /><path d="M2 6l7-4 20 0 4 9q-8 2-14-1T2 8z" fill="#7b4a3c" /><path d="M5 5l12 5M12 3l12 7M19 2l10 7" stroke="#e0a58c" strokeWidth="1.300" /></svg>
        </TaskSearch>
        <Task $w={18}><svg width="17" height="16" viewBox="0 0 17 16"><rect x="5" y="1" width="12" height="10" fill="#f2f2f2" /><rect x="0" y="5" width="12" height="9" fill="#8b8b8b" opacity=".9" /></svg></Task>
        <Task $w={38}><svg width="17" height="15" viewBox="0 0 17 15"><path d="M0 1h6l2 2h9v11.500H0z" fill="#f2b632" /><path d="M0 5h17v9.500H0z" fill="#fbd25c" /><path d="M3 9h11v5.500H3z" fill="#2e7fb8" /></svg></Task>
        <Task $w={20} $run><svg width="19" height="19" viewBox="0 0 19 19"><circle cx="8.500" cy="10.500" r="7" fill="#1e1c1c" stroke="#ccc" /><path d="M8.500 10.500Q5 8 8.500 4.500M8.500 10.500q4-1.500 5.500 2M8.500 10.500q0 4.500-4.500 4" stroke="#ccc" strokeWidth="1.500" fill="none" /><circle cx="15" cy="4" r="4" fill="#f01414" /></svg></Task>
        <Task $w={39} $run><Chrome badge="#6f8d98" /></Task>
        <Task $w={25} $on><Chrome badge="#d66aa0" /></Task>
        <Task $w={30}><svg width="16" height="16" viewBox="0 0 16 16"><rect width="16" height="16" rx="3" fill="#eee" /><path d="M3 6q4-4 8.500-2.500T11 9.500Q7 11 8 13M5 7.500q3-2 5-1" stroke="#222" strokeWidth="1.900" fill="none" /></svg></Task>
        <Clock>오후 7:57<br />2026-08-01</Clock>
      </Taskbar>
    </Screen>
  );
}
